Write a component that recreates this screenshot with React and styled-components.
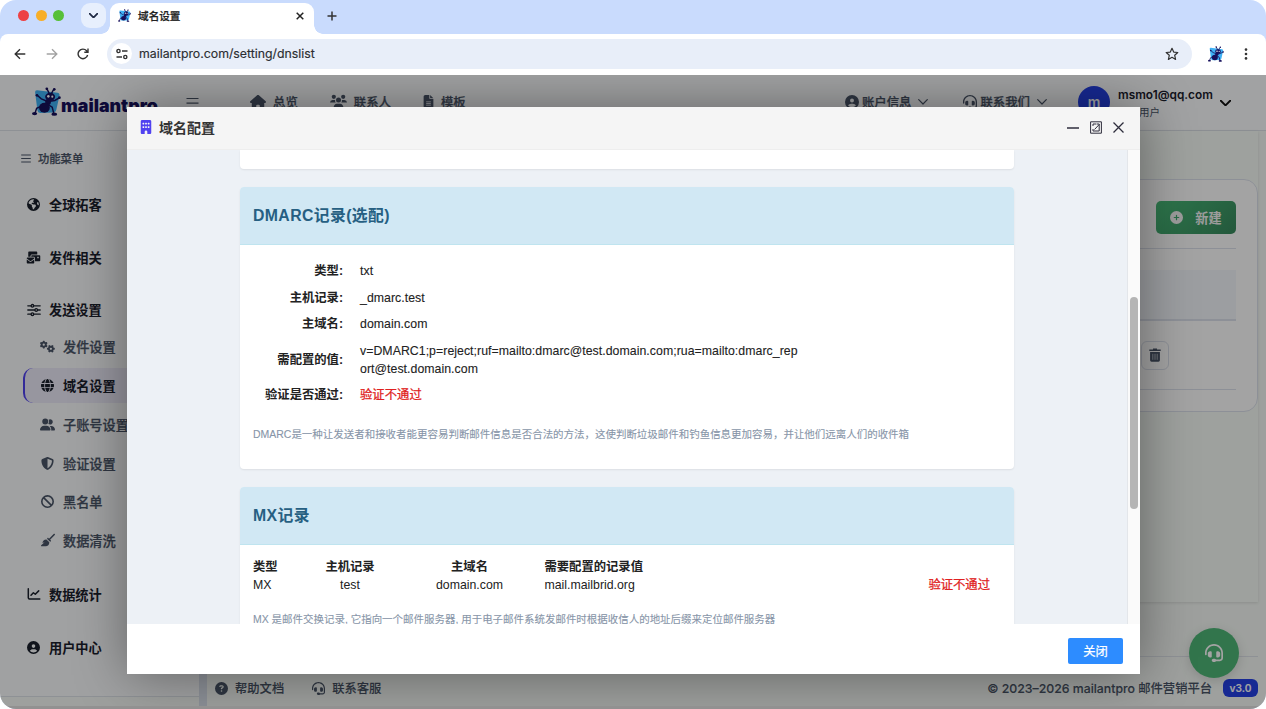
import React from "react";
import styled, { createGlobalStyle, css } from "styled-components";
import {
  FaHouse,
  FaFileLines,
  FaCircleUser,
  FaHeadset,
  FaEarthAmericas,
  FaEnvelopesBulk,
  FaGears,
  FaGlobe,
  FaUserGroup,
  FaShieldHalved,
  FaBan,
  FaBroom,
  FaCirclePlus,
  FaCircleQuestion,
  FaBuilding,
} from "react-icons/fa6";

const ui = `Inter, "Noto Sans CJK SC", sans-serif`;
const arial = `"Liberation Sans", "Noto Sans CJK SC", sans-serif`;

const menu = [
  { text: "全球拓客", icon: FaEarthAmericas },
  { text: "发件相关", icon: FaEnvelopesBulk, size: 15 },
  {
    text: "发送设置",
    icon: SlidersIcon,
    items: [
      { text: "发件设置", icon: FaGears, size: 15 },
      { text: "域名设置", icon: FaGlobe, active: true },
      { text: "子账号设置", icon: FaUserGroup, size: 15 },
      { text: "验证设置", icon: FaShieldHalved },
      { text: "黑名单", icon: FaBan },
      { text: "数据清洗", icon: FaBroom, size: 14 },
    ],
  },
  { text: "数据统计", icon: ChartIcon },
  { text: "用户中心", icon: FaCircleUser },
];

const dmarc = [
  { label: "类型:", value: "txt" },
  { label: "主机记录:", value: "_dmarc.test" },
  { label: "主域名:", value: "domain.com" },
  {
    label: "需配置的值:",
    value:
      "v=DMARC1;p=reject;ruf=mailto:dmarc@test.domain.com;rua=mailto:dmarc_report@test.domain.com",
  },
  { label: "验证是否通过:", value: "验证不通过", failed: true },
];

function Ant({ size }) {
  return (
    <svg width={size} height={size} viewBox="0 0 28 28">
      <path
        d="M3 5 Q2.800 3 5 3.100 L24.500 5.600 Q27 6 26.500 8.500 L23.500 22 Q23 24.500 20.500 24.500 L8 25 Q5.500 25 5.200 22.500 Z"
        fill="#3fb1f5"
      />
      <g fill="#17105c">
        <ellipse cx="17.500" cy="9.500" rx="4.800" ry="4" />
        <ellipse cx="15.500" cy="14.500" rx="2.800" ry="3" />
        <ellipse cx="12" cy="20" rx="5.200" ry="4.800" />
        <circle cx="14.300" cy="1.800" r="1.300" />
        <circle cx="21.500" cy="2.200" r="1.300" />
        <ellipse cx="2.500" cy="25.700" rx="2.500" ry="1.500" />
        <ellipse cx="21.500" cy="26.200" rx="2.800" ry="1.500" />
        <circle cx="26.500" cy="10.300" r="1.300" />
        <circle cx="4.800" cy="8" r="1.300" />
      </g>
      <g fill="none" stroke="#17105c" strokeWidth="1.400" strokeLinecap="round">
        <path d="M16.500 6 L14.600 2" />
        <path d="M19 6 Q20 3 21.500 2.500" />
        <path d="M14 13.500 L9 11.500 L5 8" />
        <path d="M17.500 13.800 L22 13 L26.300 10.500" />
        <path d="M8 19 L4.500 20.500 L3 25" />
        <path d="M15.500 17 L19.500 19.500 L21 25.500" />
      </g>
      <ellipse cx="15.800" cy="9" rx="1.200" ry="1.300" fill="#fff" />
      <ellipse cx="19.600" cy="9.300" rx="1" ry="1.100" fill="#fff" />
    </svg>
  );
}

function SlidersIcon() {
  return (
    <svg width="14" height="14" viewBox="0 0 14 14" fill="none" stroke="currentColor" strokeWidth="1.300" strokeLinecap="round">
      <path d="M.8 2.800h3.200M6.800 2.800h6.400M.8 7h6.800M10.600 7h2.600M.8 11.200h3.200M6.800 11.200h6.400" />
      <circle cx="5.400" cy="2.800" r="1.300" />
      <circle cx="9.200" cy="7" r="1.300" />
      <circle cx="5.400" cy="11.200" r="1.300" />
    </svg>
  );
}

function ChartIcon() {
  return (
    <svg width="14" height="14" viewBox="0 0 14 14" fill="none" stroke="currentColor" strokeWidth="1.500" strokeLinecap="round" strokeLinejoin="round">
      <path d="M1.300 1.800v8.900q0 1.200 1.200 1.200h10.300" />
      <path d="M4 8.200l2.400-2.500 1.900 1.600 3.400-3.400" />
    </svg>
  );
}

function Chevron({ width = 10, stroke = 1.2 }) {
  return (
    <svg width={width} height={width / 2 + 1} viewBox="0 0 10 6" fill="none" stroke="currentColor" strokeWidth={stroke} strokeLinecap="round" strokeLinejoin="round">
      <path d="M.7.7L5 5 9.300.7" />
    </svg>
  );
}

function Browser() {
  return (
    <>
      <TabBar>
        <Light color="#ed4245" />
        <Light color="#f7ae29" />
        <Light color="#57c038" />
        <TabSearch>
          <Chevron width={9} stroke={2} />
        </TabSearch>
        <Tab>
          <Ant size={13} />
          <TabTitle>域名设置</TabTitle>
          <svg width="8" height="8" viewBox="0 0 8 8" stroke="#222" strokeWidth="1.500">
            <path d="M.7.7l6.600 6.600M7.300.7L.7 7.300" />
          </svg>
        </Tab>
        <NewTab width="10" height="10" viewBox="0 0 10 10">
          <path d="M5 .5v9M.5 5h9" stroke="#333" strokeWidth="1.500" />
        </NewTab>
      </TabBar>
      <Toolbar>
        <NavIcon viewBox="0 0 12 12">
          <path d="M11.300 6H1.200M6 1.200L1.200 6 6 10.800" />
        </NavIcon>
        <NavIcon viewBox="0 0 12 12" $muted>
          <path d="M.7 6h10.100M6 1.200L10.800 6 6 10.800" />
        </NavIcon>
        <NavIcon viewBox="0 0 12 12">
          <path d="M10.600 7A4.800 4.800 0 1 1 9.600 2.800L11 4.200M11 .6v3.700H7.300" />
        </NavIcon>
        <Address>
          <SiteInfo>
            <svg width="12" height="12" viewBox="0 0 12 12" fill="none" stroke="#333" strokeWidth="1.400">
              <circle cx="2.500" cy="3" r="1.600" />
              <circle cx="9.300" cy="9" r="1.600" />
              <path d="M6 3h5.500M.5 9H6" />
            </svg>
          </SiteInfo>
          <Url>mailantpro.com/setting/dnslist</Url>
          <svg width="14" height="14" viewBox="0 0 14 14" fill="none" stroke="#333" strokeWidth="1.200" strokeLinejoin="round">
            <path d="M7 1.300l1.700 3.800 4.100.4-3.100 2.800.9 4.100L7 10.300l-3.600 2.100.9-4.100L1.200 5.500l4.100-.4z" />
          </svg>
        </Address>
        <Extension>
          <Ant size={16} />
        </Extension>
        <svg width="4" height="12" viewBox="0 0 4 12" fill="#333">
          <circle cx="2" cy="1.600" r="1.300" />
          <circle cx="2" cy="6" r="1.300" />
          <circle cx="2" cy="10.400" r="1.300" />
        </svg>
      </Toolbar>
    </>
  );
}

function Header() {
  return (
    <TopBar>
      <Logo>
        <Ant size={29} />
        <LogoText>mailantpro</LogoText>
      </Logo>
      <MenuToggle width="13" height="12" viewBox="0 0 13 12">
        <path d="M.5 1.500h12M.5 6.200h12M.5 10.900h12" stroke="currentColor" strokeWidth="1.200" />
      </MenuToggle>
      <TopLink $gap={7} $space={32}>
        <FaHouse size={16} />
        总览
      </TopLink>
      <TopLink $gap={7} $space={31}>
        <ContactsIcon />
        联系人
      </TopLink>
      <TopLink $gap={6}>
        <FaFileLines size={13} />
        模板
      </TopLink>
      <Spacer />
      <TopLink $gap={3} $space={35}>
        <FaCircleUser size={14} />
        账户信息
        <LinkArrow>
          <Chevron />
        </LinkArrow>
      </TopLink>
      <TopLink $gap={3} $space={31}>
        <FaHeadset size={14} />
        联系我们
        <LinkArrow>
          <Chevron />
        </LinkArrow>
      </TopLink>
      <Avatar>m</Avatar>
      <Account>
        <AccountName>msmo1@qq.com</AccountName>
        <AccountRole>普通用户</AccountRole>
      </Account>
      <AccountArrow>
        <Chevron width={11} stroke={1.7} />
      </AccountArrow>
    </TopBar>
  );
}

function ContactsIcon() {
  return (
    <svg width="17" height="15" viewBox="0 0 17 15" fill="currentColor">
      <circle cx="3.800" cy="2.800" r="2.100" />
      <circle cx="13.200" cy="2.800" r="2.100" />
      <circle cx="8.500" cy="6" r="2.500" />
      <path d="M0 8.600Q.2 6 2.600 6h2.500q-.3 1.600.6 2.600zM17 8.600Q16.800 6 14.400 6h-2.500q.3 1.600-.6 2.600zM3.500 14q.3-4 3.500-4.200h3q3.200.2 3.500 4.200z" />
    </svg>
  );
}

function Sidebar() {
  return (
    <Side>
      <SideTitle>
        <ListIcon />
        功能菜单
      </SideTitle>
      {menu.map(({ text, icon: Icon, size = 13, items }) => (
        <React.Fragment key={text}>
          <SideItem>
            <IconBox>
              <Icon size={size} />
            </IconBox>
            {text}
          </SideItem>
          {items && (
            <SubMenu>
              {items.map(({ text, icon: SubIcon, size = 13, active }) => (
                <SubItem key={text} $active={active}>
                  <IconBox>
                    <SubIcon size={size} />
                  </IconBox>
                  {text}
                </SubItem>
              ))}
            </SubMenu>
          )}
        </React.Fragment>
      ))}
    </Side>
  );
}

function ListIcon() {
  return (
    <svg width="10" height="9" viewBox="0 0 10 9" stroke="currentColor" strokeWidth="1.100">
      <path d="M.2 1h9.600M.2 4.500h9.600M.2 8h9.600" />
    </svg>
  );
}

function Content() {
  return (
    <Main>
      <Panel>
        <ListCard>
          <ListTools>
            <AddButton>
              <FaCirclePlus size={13} />
              新建
            </AddButton>
          </ListTools>
          <ListHead />
          <ListRow>
            <DeleteButton>
              <TrashIcon />
            </DeleteButton>
          </ListRow>
        </ListCard>
      </Panel>
      <Footer>
        <FooterLink>
          <FaCircleQuestion size={13} />
          帮助文档
        </FooterLink>
        <FooterLink>
          <FaHeadset size={13} />
          联系客服
        </FooterLink>
        <Spacer />
        <span>© 2023–2026 mailantpro 邮件营销平台</span>
        <Version>v3.0</Version>
      </Footer>
    </Main>
  );
}

function TrashIcon() {
  return (
    <svg width="12" height="14" viewBox="0 0 12 14" fill="none" stroke="currentColor">
      <path d="M.3 2.300h11.400M4 1.200h4" strokeWidth="1.500" />
      <path d="M1.100 4h9.800v8.300q0 1.400-1.400 1.400h-7q-1.400 0-1.400-1.400z" fill="currentColor" stroke="none" />
      <path d="M3.800 5.800v6M6 5.800v6M8.200 5.800v6" stroke="#cbd0d8" strokeWidth=".8" />
    </svg>
  );
}

function DomainDialog() {
  return (
    <Dialog>
      <DialogHead>
        <FaBuilding size={14} color="#5142f0" />
        <DialogTitle>域名配置</DialogTitle>
        <svg width="12" height="13" viewBox="0 0 12 13">
          <path d="M0 7h12" stroke="#2e2d3c" strokeWidth="1.600" />
        </svg>
        <svg width="12" height="13" viewBox="0 0 12 13" fill="none" stroke="#2e2d3c">
          <path d="M.6 8V.8h10.800v11.400H5" />
          <path d="M3 5V3h3M9.200 6v4H3V8M.6 8v4.200H5" />
          <path d="M4.500 8.500l4.700-5M6.500 3h2.700v3" />
        </svg>
        <svg width="11" height="11" viewBox="0 0 11 11">
          <path d="M.5.5l10 10M10.500.5l-10 10" stroke="#2e2d3c" strokeWidth="1.300" />
        </svg>
      </DialogHead>
      <DialogMain>
        <DialogBody>
          <CardEnd />
          <Card>
            <CardHead>DMARC记录(选配)</CardHead>
            <Fields>
              {dmarc.map((row) => (
                <Field key={row.label}>
                  <FieldLabel>{row.label}</FieldLabel>
                  <FieldValue $failed={row.failed}>{row.value}</FieldValue>
                </Field>
              ))}
            </Fields>
            <Hint>
              DMARC是一种让发送者和接收者能更容易判断邮件信息是否合法的方法，这使判断垃圾邮件和钓鱼信息更加容易，并让他们远离人们的收件箱
            </Hint>
          </Card>
          <Card>
            <CardHead>MX记录</CardHead>
            <Records>
              <b>类型</b>
              <Centered as="b">主机记录</Centered>
              <Centered as="b">主域名</Centered>
              <b>需要配置的记录值</b>
              <span />
              <span>MX</span>
              <Centered>test</Centered>
              <Centered>domain.com</Centered>
              <span>mail.mailbrid.org</span>
              <Status>验证不通过</Status>
            </Records>
            <Hint>
              MX 是邮件交换记录, 它指向一个邮件服务器, 用于电子邮件系统发邮件时根据收信人的地址后缀来定位邮件服务器
            </Hint>
          </Card>
        </DialogBody>
        <Track>
          <Thumb />
        </Track>
      </DialogMain>
      <DialogFoot>
        <CloseButton>关闭</CloseButton>
      </DialogFoot>
    </Dialog>
  );
}

export default function App() {
  return (
    <>
      <GlobalStyle />
      <Window>
        <Browser />
        <Viewport>
          <Header />
          <Columns>
            <Sidebar />
            <SideEdge />
            <Content />
          </Columns>
          <SupportButton>
            <FaHeadset size={18} />
          </SupportButton>
          <Shade>
            <DomainDialog />
          </Shade>
        </Viewport>
        <WindowEdge />
      </Window>
    </>
  );
}

const GlobalStyle = createGlobalStyle`
  * {
    box-sizing: border-box;
  }
  body {
    margin: 0;
    background: #fff;
    font-family: ${ui};
    overflow: hidden;
  }
  svg {
    display: block;
    flex-shrink: 0;
  }
`;

/* medium weight for the CJK face, which only ships regular and bold */
const medium = css`
  font-weight: 500;
  -webkit-text-stroke: 0.25px currentColor;
`;

const Window = styled.div`
  width: 1266px;
  height: 709px;
  display: flex;
  flex-direction: column;
  overflow: hidden;
  border-radius: 16px;
  background: #c9dbfd;
`;

const TabBar = styled.div`
  height: 34px;
  display: flex;
  align-items: flex-start;
  padding-left: 18px;
`;

const Light = styled.span`
  width: 11px;
  height: 11px;
  margin: 10px 6.7px 0 0;
  border-radius: 50%;
  background: ${(props) => props.color};
`;

const TabSearch = styled.div`
  width: 25px;
  height: 25px;
  margin: 3px 4px 0 10px;
  display: flex;
  align-items: center;
  justify-content: center;
  border-radius: 9px;
  color: #1f2a44;
  background: #e7effd;
`;

const Tab = styled.div`
  position: relative;
  width: 204px;
  height: 31px;
  margin-top: 3px;
  padding: 0 10px 6px 8px;
  display: flex;
  align-items: center;
  border-radius: 9px 9px 0 0;
  background: #fff;

  &::before,
  &::after {
    content: "";
    position: absolute;
    bottom: 0;
    width: 9px;
    height: 9px;
  }
  &::before {
    left: -9px;
    background: radial-gradient(circle at 0 0, transparent 8.5px, #fff 9px);
  }
  &::after {
    right: -9px;
    background: radial-gradient(circle at 100% 0, transparent 8.5px, #fff 9px);
  }
`;

const TabTitle = styled.span`
  flex: 1;
  margin-left: 7px;
  font-size: 10.6px;
  color: #222;
  ${medium}
`;

const NewTab = styled.svg`
  margin: 11px 0 0 13px;
`;

const Toolbar = styled.div`
  height: 41px;
  display: flex;
  align-items: center;
  padding: 0 18px 2px 14px;
  border-radius: 8px 8px 0 0;
  background: #fff;
`;

const NavIcon = styled.svg`
  width: 12px;
  height: 12px;
  margin-right: 19.7px;
  fill: none;
  stroke: ${(props) => (props.$muted ? "#a3a3a3" : "#333")};
  stroke-width: 1.4;
`;

const Address = styled.div`
  flex: 1;
  height: 30px;
  margin-left: -2px;
  padding: 0 13px 0 4px;
  display: flex;
  align-items: center;
  border-radius: 15px;
  background: #e8eef9;
`;

const SiteInfo = styled.span`
  width: 21px;
  height: 21px;
  display: flex;
  align-items: center;
  justify-content: center;
  border-radius: 50%;
  background: #fff;
`;

const Url = styled.span`
  flex: 1;
  margin-left: 7px;
  font-size: 12.3px;
  color: #2b2d31;
  -webkit-text-stroke: 0.15px currentColor;
`;

const Extension = styled.span`
  margin: 0 20px 0 16px;
`;

const Viewport = styled.div`
  position: relative;
  flex: 1;
  display: flex;
  flex-direction: column;
  overflow: hidden;
  background: #f7fbf7;
`;

const WindowEdge = styled.div`
  height: 3px;
  background: #929191;
`;

const TopBar = styled.header`
  height: 56px;
  flex-shrink: 0;
  display: flex;
  align-items: center;
  padding: 0 35px 2px 32px;
  color: #4a5568;
  background: #fcfdff;
  border-bottom: 1px solid #dfe3ea;
`;

const Logo = styled.div`
  width: 154px;
  display: flex;
  align-items: center;
`;

const LogoText = styled.span`
  margin: 7px 0 0 0;
  font-size: 17.8px;
  font-weight: 900;
  color: #17105c;
`;

const MenuToggle = styled.svg`
  margin: 3px 51px 0 0;
`;

const TopLink = styled.span`
  display: flex;
  align-items: center;
  gap: ${(props) => props.$gap}px;
  margin-right: ${(props) => props.$space || 0}px;
  font-size: 12.4px;
  white-space: nowrap;
  ${medium}
`;

const LinkArrow = styled.span`
  margin-left: 4px;
`;

const Spacer = styled.span`
  flex: 1;
`;

const Avatar = styled.span`
  width: 32px;
  height: 32px;
  display: flex;
  align-items: center;
  justify-content: center;
  border-radius: 50%;
  font-size: 14px;
  font-weight: 600;
  color: #fff;
  background: #2541e6;
`;

const Account = styled.div`
  width: 102px;
  margin: 3px 0 0 8px;
`;

const AccountName = styled.div`
  font-size: 11.85px;
  line-height: 18px;
  font-weight: 600;
  color: #1a202c;
`;

const AccountRole = styled.div`
  font-size: 10.5px;
  line-height: 17px;
  color: #4a5568;
`;

const AccountArrow = styled.span`
  margin-top: 3px;
  color: #111;
`;

const Columns = styled.div`
  flex: 1;
  min-height: 0;
  display: flex;
`;

const Side = styled.nav`
  width: 199px;
  height: 566px;
  padding-top: 15px;
  background: #fbfcfd;
  border-bottom: 1px solid #dfe3ea;
`;

const SideEdge = styled.div`
  width: 8px;
  background: #dbe2ec;
`;

const SideTitle = styled.div`
  height: 24px;
  margin-bottom: 8px;
  padding-left: 21px;
  display: flex;
  align-items: center;
  gap: 7px;
  font-size: 11.3px;
  color: #4a5568;
  ${medium}
`;

const SideItem = styled.div`
  height: 52.8px;
  padding-left: 26px;
  display: flex;
  align-items: center;
  font-size: 13.2px;
  font-weight: 600;
  color: #1a202c;
`;

const SubMenu = styled.div`
  margin: -7px 0 10px;
`;

const SubItem = styled.div`
  height: 35.2px;
  margin: 0 12px 3.5px 23px;
  padding-left: 15px;
  display: flex;
  align-items: center;
  font-size: 13.2px;
  color: #4a5568;
  border-left: 2px solid transparent;
  border-radius: 10px;
  ${medium}

  ${(props) =>
    props.$active &&
    css`
      color: #1a202c;
      font-weight: 600;
      -webkit-text-stroke: 0;
      border-left-color: #5142f0;
      background: #ecebf9;
    `}
`;

const IconBox = styled.span`
  width: 15px;
  margin-right: 8px;
  display: flex;
  justify-content: center;
`;

const Main = styled.main`
  flex: 1;
  display: flex;
  flex-direction: column;
`;

const Panel = styled.section`
  height: 471px;
  margin-right: 8px;
  padding-top: 48px;
  background: #f8fcf8;
  box-shadow: 0 1px 3px rgba(0, 0, 0, 0.12);
`;

const ListCard = styled.div`
  height: 233px;
  padding: 21px 21px 0;
  border: 1px solid #dde2ec;
  border-radius: 14px;
  background: #fff;
`;

const ListTools = styled.div`
  height: 48px;
  display: flex;
  justify-content: flex-end;
  align-items: flex-start;
  border-bottom: 1px solid #dde2ec;
`;

const AddButton = styled.span`
  width: 80px;
  height: 33px;
  display: flex;
  align-items: center;
  justify-content: center;
  gap: 12px;
  border-radius: 5px;
  font-size: 13.2px;
  font-weight: 600;
  color: #f4f4f4;
  background: linear-gradient(135deg, #48bb78, #38895d);
`;

const ListHead = styled.div`
  height: 51px;
  margin-top: 21px;
  background: #f5f8fc;
  border-bottom: 2px solid #dde2ec;
`;

const ListRow = styled.div`
  height: 69px;
  padding-right: 67px;
  display: flex;
  align-items: center;
  justify-content: flex-end;
  border-bottom: 1px solid #dde2ec;
`;

const DeleteButton = styled.span`
  width: 28px;
  height: 29px;
  display: flex;
  align-items: center;
  justify-content: center;
  border: 1px solid #dde2ec;
  border-radius: 6px;
  color: #4a5568;
`;

const Footer = styled.footer`
  flex: 1;
  margin: 54px 8px 0 0;
  padding: 13px 0 0 8px;
  display: flex;
  align-items: center;
  font-size: 12.3px;
  color: #4a5568;
  border-top: 1px solid #dfe3ea;
  ${medium}
  -webkit-text-stroke-width: 0.1px;
`;

const FooterLink = styled.span`
  margin-right: 28px;
  display: flex;
  align-items: center;
  gap: 7px;
`;

const Version = styled.span`
  height: 18px;
  margin-left: 11px;
  padding: 0 6.5px;
  border-radius: 6px;
  font-size: 10.2px;
  line-height: 18px;
  font-weight: 600;
  color: #fff;
  background: #2541e6;
`;

const SupportButton = styled.div`
  position: absolute;
  right: 27px;
  bottom: 28px;
  width: 50px;
  height: 50px;
  display: flex;
  align-items: center;
  justify-content: center;
  border-radius: 50%;
  color: #fff;
  background: #4fb878;
  box-shadow: 0 3px 12px rgba(0, 0, 0, 0.15);
`;

const Shade = styled.div`
  position: absolute;
  inset: 0;
  padding: 32px 0 0 127px;
  background: rgba(0, 0, 0, 0.36);
`;

const Dialog = styled.div`
  width: 1013px;
  height: 567px;
  display: flex;
  flex-direction: column;
  font-family: ${arial};
  background: #fff;
  box-shadow: 1px 1px 50px rgba(0, 0, 0, 0.4);
`;

const DialogHead = styled.div`
  height: 43px;
  padding: 0 16px 2px 12px;
  display: flex;
  align-items: center;
  gap: 11px;
  background: #f5f5f5;
  border-bottom: 1px solid #eee;
`;

const DialogTitle = styled.span`
  flex: 1;
  margin-left: -5px;
  font-size: 14px;
  font-weight: 600;
  color: #333;
`;

const DialogMain = styled.div`
  height: 474px;
  display: flex;
  overflow: hidden;
`;

const DialogBody = styled.div`
  flex: 1;
  padding: 0 113px;
  overflow: hidden;
  background: #edf1f6;
`;

const Track = styled.div`
  width: 13px;
  padding: 147px 2px 0 2px;
  background: #fafafa;
  border-left: 1px solid #e3e6ea;
`;

const Thumb = styled.div`
  width: 8px;
  height: 212px;
  border-radius: 4px;
  background: #b5b5b5;
`;

const Card = styled.div`
  margin-bottom: 18px;
  padding-bottom: 24px;
  border-radius: 4px;
  overflow: hidden;
  color: #222;
  background: #fff;
  box-shadow: 0 1px 2px rgba(0, 0, 0, 0.08);
`;

const CardEnd = styled(Card)`
  height: 19px;
  padding: 0;
  border-radius: 0 0 4px 4px;
`;

const CardHead = styled.div`
  height: 58px;
  padding: 0 13px;
  line-height: 57px;
  font-size: 15.8px;
  font-weight: 700;
  letter-spacing: 0.4px;
  color: #265f82;
  background: #d1e8f4;
  border-bottom: 1px solid #bfe4ef;
`;

const Fields = styled.div`
  padding: 14px 13px 0;
`;

const Field = styled.div`
  padding: 4.4px 0;
  display: flex;
  align-items: center;
  font-size: 12.32px;
  line-height: 17.7px;
`;

const FieldLabel = styled.span`
  width: 90px;
  margin-right: 17px;
  text-align: right;
  font-weight: 700;
  white-space: nowrap;
`;

const FieldValue = styled.span`
  width: 441px;
  letter-spacing: 0.04px;
  word-break: break-all;
  color: ${(props) => (props.$failed ? "#e02020" : "#222")};
  -webkit-text-stroke: ${(props) => (props.$failed ? "0.25px" : "0.1px")} currentColor;
`;

const Hint = styled.div`
  padding: 16px 13px 0;
  font-size: 10.48px;
  line-height: 20px;
  color: #8795a8;
  white-space: nowrap;
  -webkit-text-stroke: 0.1px currentColor;
`;

const Records = styled.div`
  padding: 14px 24px 0 13px;
  display: grid;
  grid-template-columns: 48px 98px 141px 1fr auto;
  font-size: 12.32px;
  line-height: 17.6px;

  > :nth-child(5n + 4) {
    margin-left: 4.5px;
  }
`;

const Centered = styled.span`
  text-align: center;
`;

const Status = styled.span`
  color: #e02020;
  -webkit-text-stroke: 0.25px currentColor;
`;

const DialogFoot = styled.div`
  flex: 1;
  padding: 14px 17px 0 0;
  display: flex;
  justify-content: flex-end;
  align-items: flex-start;
`;

const CloseButton = styled.button`
  width: 55px;
  height: 26px;
  padding: 0;
  border: 0;
  border-radius: 2px;
  font-family: ${arial};
  font-size: 12.3px;
  color: #fff;
  background: #2d8cff;
  -webkit-text-stroke: 0.25px currentColor;
`;
